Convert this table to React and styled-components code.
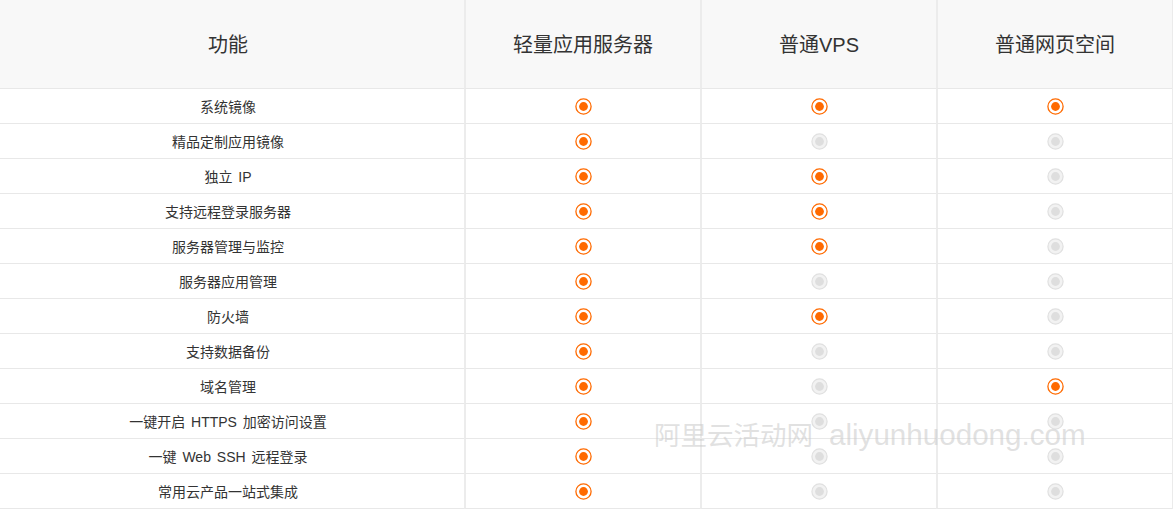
import React from "react";
import styled, { createGlobalStyle } from "styled-components";

const Global = createGlobalStyle`
  html, body { margin: 0; padding: 0; background: #fff; }
  body { font-family: "Liberation Sans", "Noto Sans CJK SC", sans-serif; color: #333; }
`;

const Wrap = styled.div`
  position: relative;
  width: 1173px;
`;

const Table = styled.div`
  display: grid;
  grid-template-columns: 464px 236px 236px 236px;
  border-right: 1px solid #ebebeb;
`;

const HeadCell = styled.div`
  box-sizing: border-box;
  height: 89px;
  background: #f8f8f8;
  display: flex;
  align-items: center;
  justify-content: center;
  font-size: 20px;
  color: #333;
  border-bottom: 1px solid #e8e8e8;
  padding-bottom: 2px;
  padding-right: ${(p) => (p.$first ? "8px" : "0")};
  border-left: ${(p) => (p.$first ? "none" : "2px solid #ececec")};
`;

const Cell = styled.div`
  box-sizing: border-box;
  height: 35px;
  display: flex;
  align-items: center;
  justify-content: center;
  font-size: 14px;
  color: #333;
  word-spacing: 2px;
  border-bottom: 1px solid #e8e8e8;
  padding-bottom: ${(p) => (p.$first ? "1px" : "0")};
  padding-right: ${(p) => (p.$first ? "8px" : "0")};
  border-left: ${(p) => (p.$first ? "none" : "2px solid #ececec")};
`;

const Watermark = styled.div`
  position: absolute;
  left: 654px;
  top: 417px;
  display: flex;
  align-items: baseline;
  gap: 16px;
  line-height: 36px;
  color: rgba(200, 200, 200, 0.55);
  white-space: nowrap;
  pointer-events: none;
`;

const MarkPart = styled.span`
  font-size: ${(p) => p.$size}px;
`;

const Dot = ({ on }) =>
  on ? (
    <svg width="17" height="17" viewBox="0 0 17 17">
      <circle cx="8.5" cy="8.5" r="7.6" fill="#fff" stroke="#ff6a00" strokeWidth="1.3" />
      <circle cx="8.5" cy="8.5" r="4.4" fill="#ff6a00" />
    </svg>
  ) : (
    <svg width="17" height="17" viewBox="0 0 17 17">
      <circle cx="8.5" cy="8.5" r="7.6" fill="#f2f2f2" stroke="#e0e0e0" strokeWidth="1.2" />
      <circle cx="8.5" cy="8.5" r="4.4" fill="#dedede" />
    </svg>
  );

const headers = ["功能", "轻量应用服务器", "普通VPS", "普通网页空间"];

const rows = [
  ["系统镜像", 1, 1, 1],
  ["精品定制应用镜像", 1, 0, 0],
  ["独立 IP", 1, 1, 0],
  ["支持远程登录服务器", 1, 1, 0],
  ["服务器管理与监控", 1, 1, 0],
  ["服务器应用管理", 1, 0, 0],
  ["防火墙", 1, 1, 0],
  ["支持数据备份", 1, 0, 0],
  ["域名管理", 1, 0, 1],
  ["一键开启 HTTPS 加密访问设置", 1, 0, 0],
  ["一键 Web SSH 远程登录", 1, 0, 0],
  ["常用云产品一站式集成", 1, 0, 0],
];

export default function App() {
  return (
    <>
      <Global />
      <Wrap>
        <Table>
          {headers.map((h, i) => (
            <HeadCell key={h} $first={i === 0}>
              {h}
            </HeadCell>
          ))}
          {rows.map((r) => (
            <React.Fragment key={r[0]}>
              <Cell $first>{r[0]}</Cell>
              <Cell><Dot on={r[1]} /></Cell>
              <Cell><Dot on={r[2]} /></Cell>
              <Cell><Dot on={r[3]} /></Cell>
            </React.Fragment>
          ))}
        </Table>
        <Watermark>
          <MarkPart $size={26.5}>阿里云活动网</MarkPart>
          <MarkPart $size={29.6}>aliyunhuodong.com</MarkPart>
        </Watermark>
      </Wrap>
    </>
  );
}
